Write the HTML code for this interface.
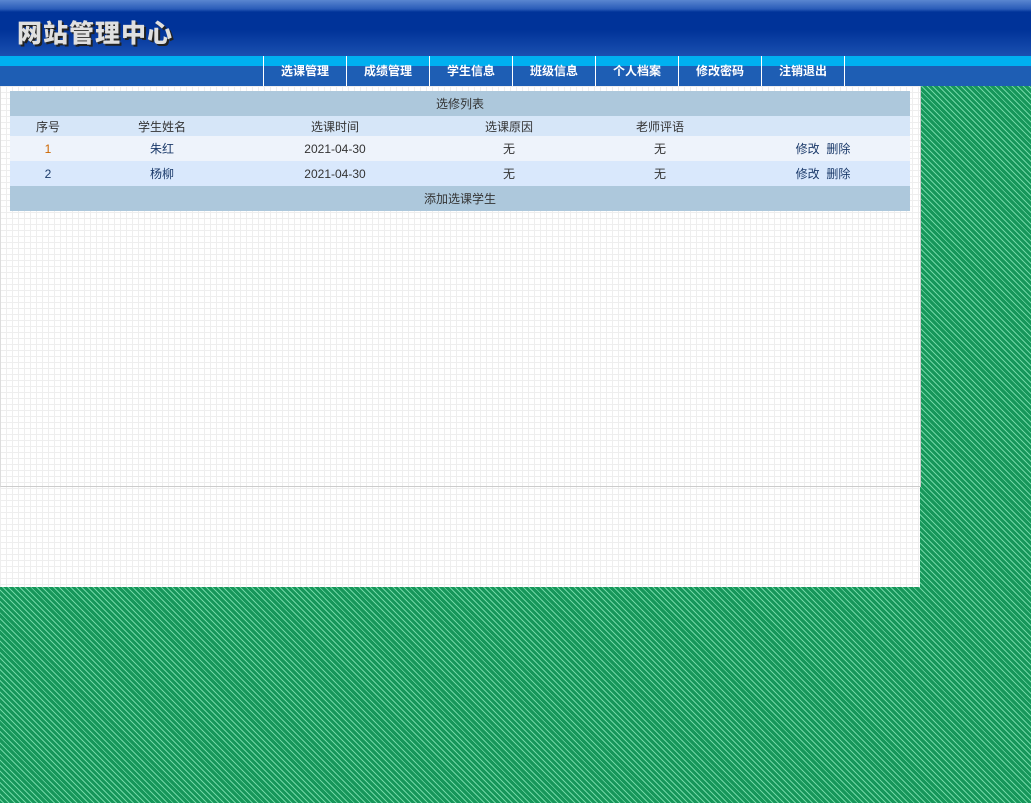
<!DOCTYPE html>
<html><head><meta charset="utf-8"><style>
body{margin:0;width:1031px;height:803px;overflow:hidden;font-family:"Liberation Sans","Noto Sans CJK SC",sans-serif;font-size:12px;color:#333;
background:repeating-linear-gradient(45deg,#16965a 0 2px,#6fd6a4 2px 3px,#16965a 3px 4px);}
.hdr{position:absolute;left:0;top:0;width:1031px;height:56px;background:linear-gradient(#5a86d0 0,#2a5cb8 9px,#003399 12px,#003399 30px,#1a50b0 56px);}
.logo{position:absolute;left:17px;top:14px;font-size:25px;font-weight:900;color:#e0e0e0;letter-spacing:1px;text-shadow:2px 2px 0 #222,1px 1px 0 #555;font-family:"Noto Sans CJK SC",sans-serif;line-height:36px}
.cy{position:absolute;top:56px;left:0;width:1031px;height:10px;background:#00b0f0}
.nb{position:absolute;top:66px;left:0;width:1031px;height:20px;background:#1e5eb4}
.nav{position:absolute;top:56px;left:263px;height:30px;display:flex;border-left:1px solid #fff}
.nav div{width:82px;border-right:1px solid #fff;color:#fff;font-weight:bold;font-size:12px;text-align:center;line-height:30px}
.main{position:absolute;left:0;top:86px;width:920px;height:501px;background-color:#fff;
background-image:linear-gradient(#eee 1px,transparent 1px),linear-gradient(90deg,#eee 1px,transparent 1px);background-size:6px 6px}
.box{position:absolute;left:0;top:0;width:919px;height:400px;border-right:1px solid #ccc;border-bottom:1px solid #ccc;border-left:1px solid #ddd}
table{position:absolute;left:10px;top:5px;width:900px;border-collapse:collapse;table-layout:fixed}
td{text-align:center;padding:0;font-size:12px}
.t td{background:#adc8dc;height:25px}
.h td{background:#d6e6f8;height:20px}
.r1 td{background:#eef3fb;height:25px}
.r2 td{background:#d9e8fc;height:25px}
a{color:#1b3a6a;text-decoration:none}
</style></head><body>
<div class="hdr"><div class="logo">网站管理中心</div></div>
<div class="cy"></div><div class="nb"></div>
<div class="nav"><div>选课管理</div><div>成绩管理</div><div>学生信息</div><div>班级信息</div><div>个人档案</div><div>修改密码</div><div>注销退出</div></div>
<div class="main"><div class="box"></div>
<table>
<colgroup><col style="width:76px"><col style="width:152px"><col style="width:194px"><col style="width:154px"><col style="width:148px"><col style="width:176px"></colgroup>
<tr class="t"><td colspan="6">选修列表</td></tr>
<tr class="h"><td>序号</td><td>学生姓名</td><td>选课时间</td><td>选课原因</td><td>老师评语</td><td></td></tr>
<tr class="r1"><td style="color:#c60">1</td><td><a>朱红</a></td><td>2021-04-30</td><td>无</td><td>无</td><td style="padding-left:2px"><a>修改</a>&nbsp; <a>删除</a></td></tr>
<tr class="r2"><td style="color:#1b3a6a">2</td><td><a>杨柳</a></td><td>2021-04-30</td><td>无</td><td>无</td><td style="padding-left:2px"><a>修改</a>&nbsp; <a>删除</a></td></tr>
<tr class="t"><td colspan="6">添加选课学生</td></tr>
</table></div>
</body></html>
